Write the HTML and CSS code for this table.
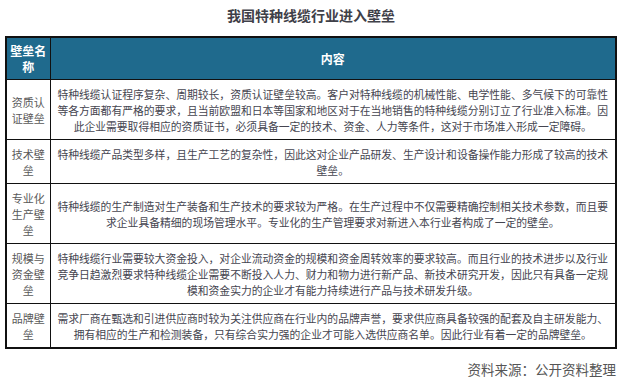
FILE: index.html
```html
<!DOCTYPE html>
<html lang="zh">
<head>
  <meta charset="UTF-8" />
  <meta name="viewport" content="width=device-width, initial-scale=1.0" />
  <title>我国特种线缆行业进入壁垒</title>
  <link rel="stylesheet" href="styles.css">
</head>
<body>
  <div class="page">
    <h1 class="title">我国特种线缆行业进入壁垒</h1>
    <table class="barriers">
      <thead>
        <tr>
          <th class="name-col">壁垒名称</th>
          <th>内容</th>
        </tr>
      </thead>
      <tbody>
        <tr>
          <td class="name">资质认证壁垒</td>
          <td class="desc">特种线缆认证程序复杂、周期较长，资质认证壁垒较高。客户对特种线缆的机械性能、电学性能、多气候下的可靠性<br>等各方面都有严格的要求，且当前欧盟和日本等国家和地区对于在当地销售的特种线缆分别订立了行业准入标准。因<br>此企业需要取得相应的资质证书，必须具备一定的技术、资金、人力等条件，这对于市场准入形成一定障碍。</td>
        </tr>
        <tr>
          <td class="name">技术壁垒</td>
          <td class="desc">特种线缆产品类型多样，且生产工艺的复杂性，因此这对企业产品研发、生产设计和设备操作能力形成了较高的技术<br>壁垒。</td>
        </tr>
        <tr>
          <td class="name">专业化生产壁垒</td>
          <td class="desc">特种线缆的生产制造对生产装备和生产技术的要求较为严格。在生产过程中不仅需要精确控制相关技术参数，而且要<br>求企业具备精细的现场管理水平。专业化的生产管理要求对新进入本行业者构成了一定的壁垒。</td>
        </tr>
        <tr>
          <td class="name">规模与资金壁垒</td>
          <td class="desc">特种线缆行业需要较大资金投入，对企业流动资金的规模和资金周转效率的要求较高。而且行业的技术进步以及行业<br>竞争日趋激烈要求特种线缆企业需要不断投入人力、财力和物力进行新产品、新技术研究开发，因此只有具备一定规<br>模和资金实力的企业才有能力持续进行产品与技术研发升级。</td>
        </tr>
        <tr>
          <td class="name">品牌壁垒</td>
          <td class="desc">需求厂商在甄选和引进供应商时较为关注供应商在行业内的品牌声誉，要求供应商具备较强的配套及自主研发能力、<br>拥有相应的生产和检测装备，只有综合实力强的企业才可能入选供应商名单。因此行业有着一定的品牌壁垒。</td>
        </tr>
      </tbody>
    </table>
    <div class="source">资料来源：公开资料整理</div>
  </div>
</body>
</html>
```

FILE: styles.css
```css
* { margin: 0; padding: 0; box-sizing: border-box; }
body {
  background: #fff;
  font-family: "Noto Sans CJK SC", "Noto Sans", sans-serif;
  color: #444;
}
.page { width: 626px; padding: 0 9px 0 5px; }
.title {
  font-size: 14px;
  font-weight: 700;
  line-height: 20px;
  color: #3f4048;
  text-align: center;
  padding-top: 5px;
  margin-bottom: 11px;
}
.barriers {
  width: 612px;
  border-collapse: collapse;
  border: 2px solid #111;
  table-layout: fixed;
}
.barriers th, .barriers td {
  border: 1px solid #111;
  text-align: center;
  vertical-align: middle;
  line-height: 16px;
}
.barriers th {
  background: #1f6a8d;
  color: #fff;
  font-size: 12px;
  font-weight: 700;
  padding: 5px 2px 4px;
}
.barriers .name-col { width: 44px; }
.barriers td { padding: 6px 4px 5px; }
.barriers td.name { font-size: 11px; color: #595959; padding: 6px 2px 5px; }
.desc { font-size: 10.8px; color: #454550; }
.source {
  font-size: 13.5px;
  line-height: 20px;
  color: #555;
  text-align: right;
  margin-top: 10px;
  padding-right: 1px;
}
```
